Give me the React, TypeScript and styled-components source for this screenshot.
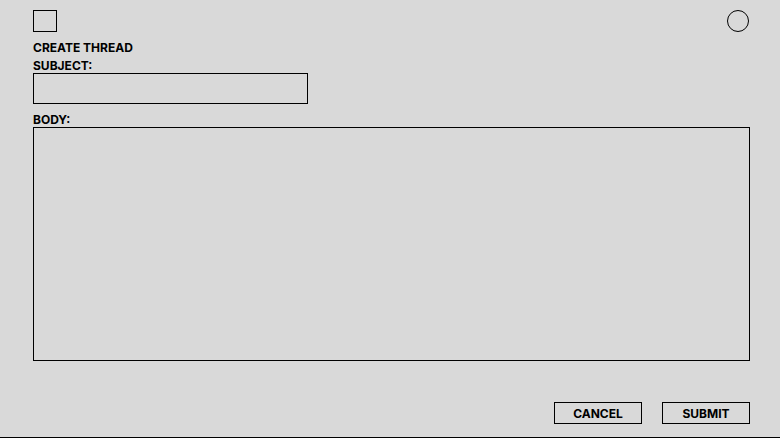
import { FC } from "react";
import styled, { createGlobalStyle } from "styled-components";

const GlobalStyle = createGlobalStyle`
    html, body {
        margin: 0;
        padding: 0;
        background: #d9d9d9;
    }

    * {
        box-sizing: border-box;
    }
`;

const Page = styled.div`
    display: flex;
    flex-direction: column;
    height: 438px;
    padding: 10px 30px 0 33px;
    background: #d9d9d9;
    border-bottom: 1px solid #000;
    font-family: Inter, "Liberation Sans", sans-serif;
    color: #000;
`;

const TopBar = styled.div`
    display: flex;
    justify-content: space-between;
    align-items: center;
    height: 22px;
`;

const SquareIcon = styled.div`
    width: 24px;
    height: 22px;
    border: 1px solid #000;
`;

const CircleIcon = styled.div`
    width: 22px;
    height: 22px;
    margin-right: 1px;
    border: 1px solid #000;
    border-radius: 50%;
`;

const Title = styled.h1`
    margin: 9px 0 0;
    font-size: 12px;
    line-height: 14px;
    font-weight: 700;
`;

const Label = styled.label<{ $top: number }>`
    display: block;
    margin-top: ${(p) => p.$top}px;
    font-size: 12px;
    line-height: 14px;
    font-weight: 700;
`;

const SubjectInput = styled.input`
    display: block;
    width: 275px;
    height: 31px;
    border: 1px solid #000;
    background: transparent;
    outline: none;
`;

const BodyInput = styled.textarea`
    display: block;
    width: 100%;
    height: 234px;
    border: 1px solid #000;
    background: transparent;
    resize: none;
    outline: none;
`;

const Actions = styled.div`
    display: flex;
    justify-content: flex-end;
    gap: 20px;
    margin-top: 41px;
`;

const Button = styled.button`
    width: 88px;
    height: 22px;
    padding: 0;
    border: 1px solid #000;
    background: transparent;
    font-family: Inter, "Liberation Sans", sans-serif;
    font-size: 12px;
    font-weight: 700;
    color: #000;
`;

const App: FC = () => {
    return (
        <>
            <GlobalStyle />
            <Page>
                <TopBar>
                    <SquareIcon />
                    <CircleIcon />
                </TopBar>
                <Title>CREATE THREAD</Title>
                <Label $top={4}>SUBJECT:</Label>
                <SubjectInput />
                <Label $top={9}>BODY:</Label>
                <BodyInput />
                <Actions>
                    <Button>CANCEL</Button>
                    <Button>SUBMIT</Button>
                </Actions>
            </Page>
        </>
    );
};

export default App;
